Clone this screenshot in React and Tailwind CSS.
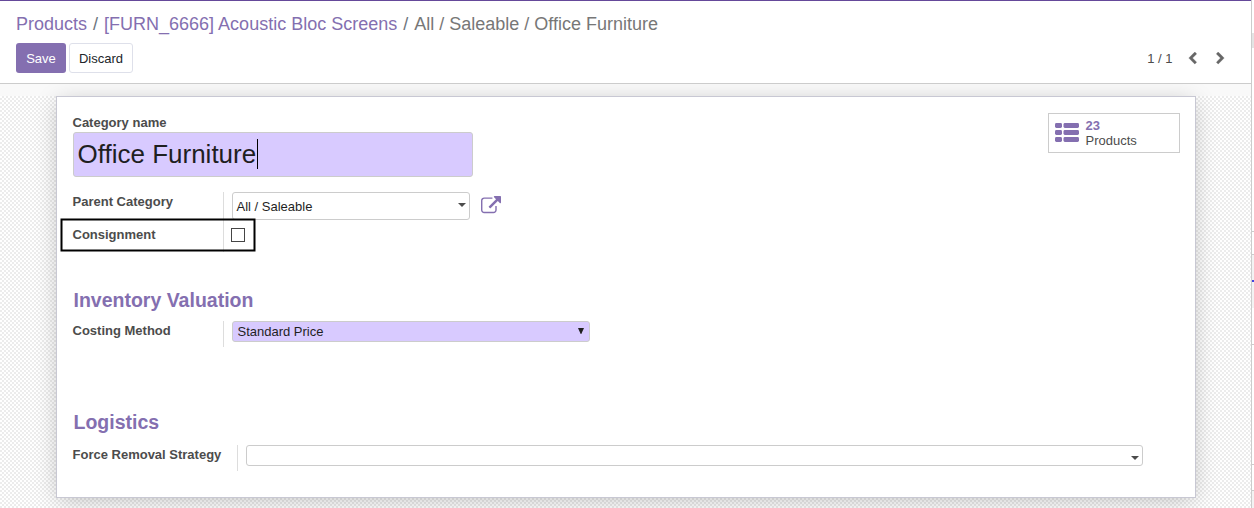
import React from "react";

const CHEVRON =
  "M1427 301l-531 531 531 531q19 19 19 45t-19 45l-166 166q-19 19-45 19t-45-19l-742-742q-19-19-19-45t19-45l742-742q19-19 45-19t45 19l166 166q19 19 19 45t-19 45z";
const EXTERNAL =
  "M1408 928v320q0 119-84.5 203.5t-203.5 84.5h-832q-119 0-203.5-84.5t-84.5-203.5v-832q0-119 84.5-203.5t203.5-84.5h704q14 0 23 9t9 23v64q0 14-9 23t-23 9h-704q-66 0-113 47t-47 113v832q0 66 47 113t113 47h832q66 0 113-47t47-113v-320q0-14 9-23t23-9h64q14 0 23 9t9 23zm384-864v512q0 26-19 45t-45 19-45-19l-176-176-652 652q-10 10-23 10t-23-10l-114-114q-10-10-10-23t10-23l652-652-176-176q-19-19-19-45t19-45 45-19h512q26 0 45 19t19 45z";

function Chevron({ className }) {
  return (
    <svg viewBox="0 0 1792 1792" className={className} fill="currentColor" stroke="currentColor" strokeWidth="50">
      <path d={CHEVRON} />
    </svg>
  );
}

function ListIcon() {
  return (
    <svg width="24" height="19" viewBox="0 0 24 19" fill="#846fb0" className="-mt-[1px]">
      {[0, 7, 14].map((y) => (
        <g key={y}>
          <rect x="0" y={y} width="7" height="5" rx="1.4" />
          <rect x="8.5" y={y} width="15.5" height="5" rx="1.4" />
        </g>
      ))}
    </svg>
  );
}

function Caret({ className }) {
  return (
    <svg width="8" height="4" viewBox="0 0 8 4" className={className}>
      <path d="M0 0h8L4 4z" fill="#4c4c4c" />
    </svg>
  );
}

function ControlPanel() {
  return (
    <header className="h-[84px] shrink-0 border-t border-b border-t-[#65499a] border-b-[#cccccc] bg-white px-4 pt-3">
      <nav className="flex h-[22px] items-center whitespace-pre text-[18px] text-[#777777]">
        <span className="text-[#846fb0]">Products</span>
        <span className="px-[6px] text-[#6c757d]">/</span>
        <span className="text-[#846fb0]">[FURN_6666] Acoustic Bloc Screens</span>
        <span className="px-[6px] text-[#6c757d]">/</span>
        <span>All / Saleable / Office Furniture</span>
      </nav>
      <div className="mt-2 flex h-[30px] items-center">
        <button className="h-[30px] w-[50px] rounded-[3px] bg-[#846fb0] pt-[2px] text-white">Save</button>
        <button className="ml-[3px] h-[30px] w-16 rounded-[3px] border border-[#dee0ea] bg-white pt-[2px] text-[#212529]">
          Discard
        </button>
        <div className="mr-[8px] ml-auto flex items-center text-[#4c4c4c]">
          <span className="mr-[13.5px] pt-[2px]">1 / 1</span>
          <Chevron className="size-[13px] text-[#666666]" />
          <Chevron className="ml-[15px] size-[13px] -scale-x-100 text-[#666666]" />
        </div>
      </div>
    </header>
  );
}

function Sheet() {
  return (
    <section className="mx-auto mt-3 h-[402px] w-[1140px] border border-[#c8c8d3] bg-white pt-4 pr-[15px] pl-4 shadow-[0_4px_22px_-3px_rgba(0,0,0,0.25)]">
      <div className="flex h-[79px] justify-between">
        <div>
          <label className="mt-[2px] block h-[17px] leading-[15px] font-bold">Category name</label>
          <div className="flex h-[45px] w-[400px] items-center rounded-[3px] border border-[#cccccc] bg-[#d8caff] pl-1 text-[26px] text-[#1f1f1f]">
            <span>Office Furniture</span>
            <span className="-mt-[2px] ml-[0.7px] h-[30px] w-px bg-black" />
          </div>
        </div>
        <button className="flex h-10 w-[132px] items-center border border-[#cccccc] pl-[6px] text-left leading-[15px]">
          <ListIcon />
          <span className="ml-[7px] flex flex-col">
            <span className="font-bold text-[#846fb0]">23</span>
            <span>Products</span>
          </span>
        </button>
      </div>

      <div className="relative flex h-[60px]">
        <div className="flex w-[151px] shrink-0 flex-col border-r border-[#dddddd] font-bold">
          <span className="mt-[2px] leading-[15px]">Parent Category</span>
          <span className="mt-[18px] leading-[15px]">Consignment</span>
        </div>
        <div className="ml-2">
          <div className="flex items-center">
            <div className="flex h-[28px] w-[238px] items-center justify-between rounded-[3px] border border-[#cccccc] pr-[3px] pl-1 text-[#1f1f1f]">
              <span className="pt-[2px]">All / Saleable</span>
              <Caret className="-mt-[2px]" />
            </div>
            <svg viewBox="0 0 1792 1792" className="-mt-px ml-[11px] size-5" fill="#846fb0">
              <path d={EXTERNAL} />
            </svg>
          </div>
          <div className="mt-2 -ml-px size-[14px] border border-[#454545] bg-white" />
        </div>
        <svg width="196" height="34" viewBox="0 0 196 34" className="absolute top-[26px] -left-[13px]">
          <rect x="1.5" y="1.5" width="193" height="31" fill="none" stroke="#000000" strokeWidth="2" />
        </svg>
      </div>

      <h2 className="mt-[36px] ml-[1px] h-6 text-[19.5px] leading-6 font-bold text-[#846fb0]">Inventory Valuation</h2>
      <div className="mt-[9px] flex h-[26px]">
        <span className="w-[151px] shrink-0 border-r border-[#dddddd] pt-[2px] leading-[15px] font-bold">
          Costing Method
        </span>
        <div className="ml-2 flex h-[21px] w-[358px] items-center justify-between rounded-[3px] border border-[#cccccc] bg-[#d8caff] pr-[5px] pl-[5px] text-[#1f1f1f]">
          <span>Standard Price</span>
          <svg width="6" height="6" viewBox="0 0 6 6" className="-mt-[2px]">
            <path d="M0 0h6L3.3 6H2.7z" fill="#1f1f1f" />
          </svg>
        </div>
      </div>

      <h2 className="mt-[63px] ml-[1px] h-6 text-[19.5px] leading-6 font-bold text-[#846fb0]">Logistics</h2>
      <div className="mt-[11px] flex h-[26px]">
        <span className="w-[165px] shrink-0 border-r border-[#dddddd] pt-[2px] leading-[15px] font-bold">
          Force Removal Strategy
        </span>
        <div className="ml-2 flex h-[21px] w-[897px] items-center justify-end rounded-[3px] border border-[#cccccc] pr-[3px]">
          <Caret className="mt-[5px]" />
        </div>
      </div>
    </section>
  );
}

function EdgeStrip() {
  return (
    <aside className="flex w-[3px] shrink-0 flex-col border-l border-[#cccccc] bg-white">
      <div className="mt-[33px] h-[15px] bg-[#e4e4e4]" />
      <div className="mt-[183px] h-px bg-[#cccccc]" />
      <div className="mt-[22px] h-[54px] border-t border-[#cccccc] bg-[#f3f3f3] pt-[25px]">
        <div className="h-[2px] bg-[#4444e0]" />
      </div>
      <div className="mt-[36px] h-px bg-[#cccccc]" />
      <div className="mt-[119px] h-px bg-[#cccccc]" />
      <div className="mt-[25px] grow border-t border-[#cccccc] bg-[#f3f3f3]" />
    </aside>
  );
}

export default function App() {
  return (
    <div className="flex h-[508px] w-[1254px] overflow-hidden bg-white font-['Liberation_Sans',Arial,sans-serif] text-[13px] text-[#4c4c4c]">
      <main className="flex w-[1251px] shrink-0 flex-col overflow-hidden">
        <ControlPanel />
        <div className="grow overflow-hidden bg-[repeating-conic-gradient(#ececec_0_25%,#ffffff_0_50%)] bg-[size:4px_4px]">
          <div className="-mb-3 h-3 bg-[#f9f9f9]" />
          <div className="relative flow-root">
            <Sheet />
          </div>
        </div>
      </main>
      <EdgeStrip />
    </div>
  );
}
